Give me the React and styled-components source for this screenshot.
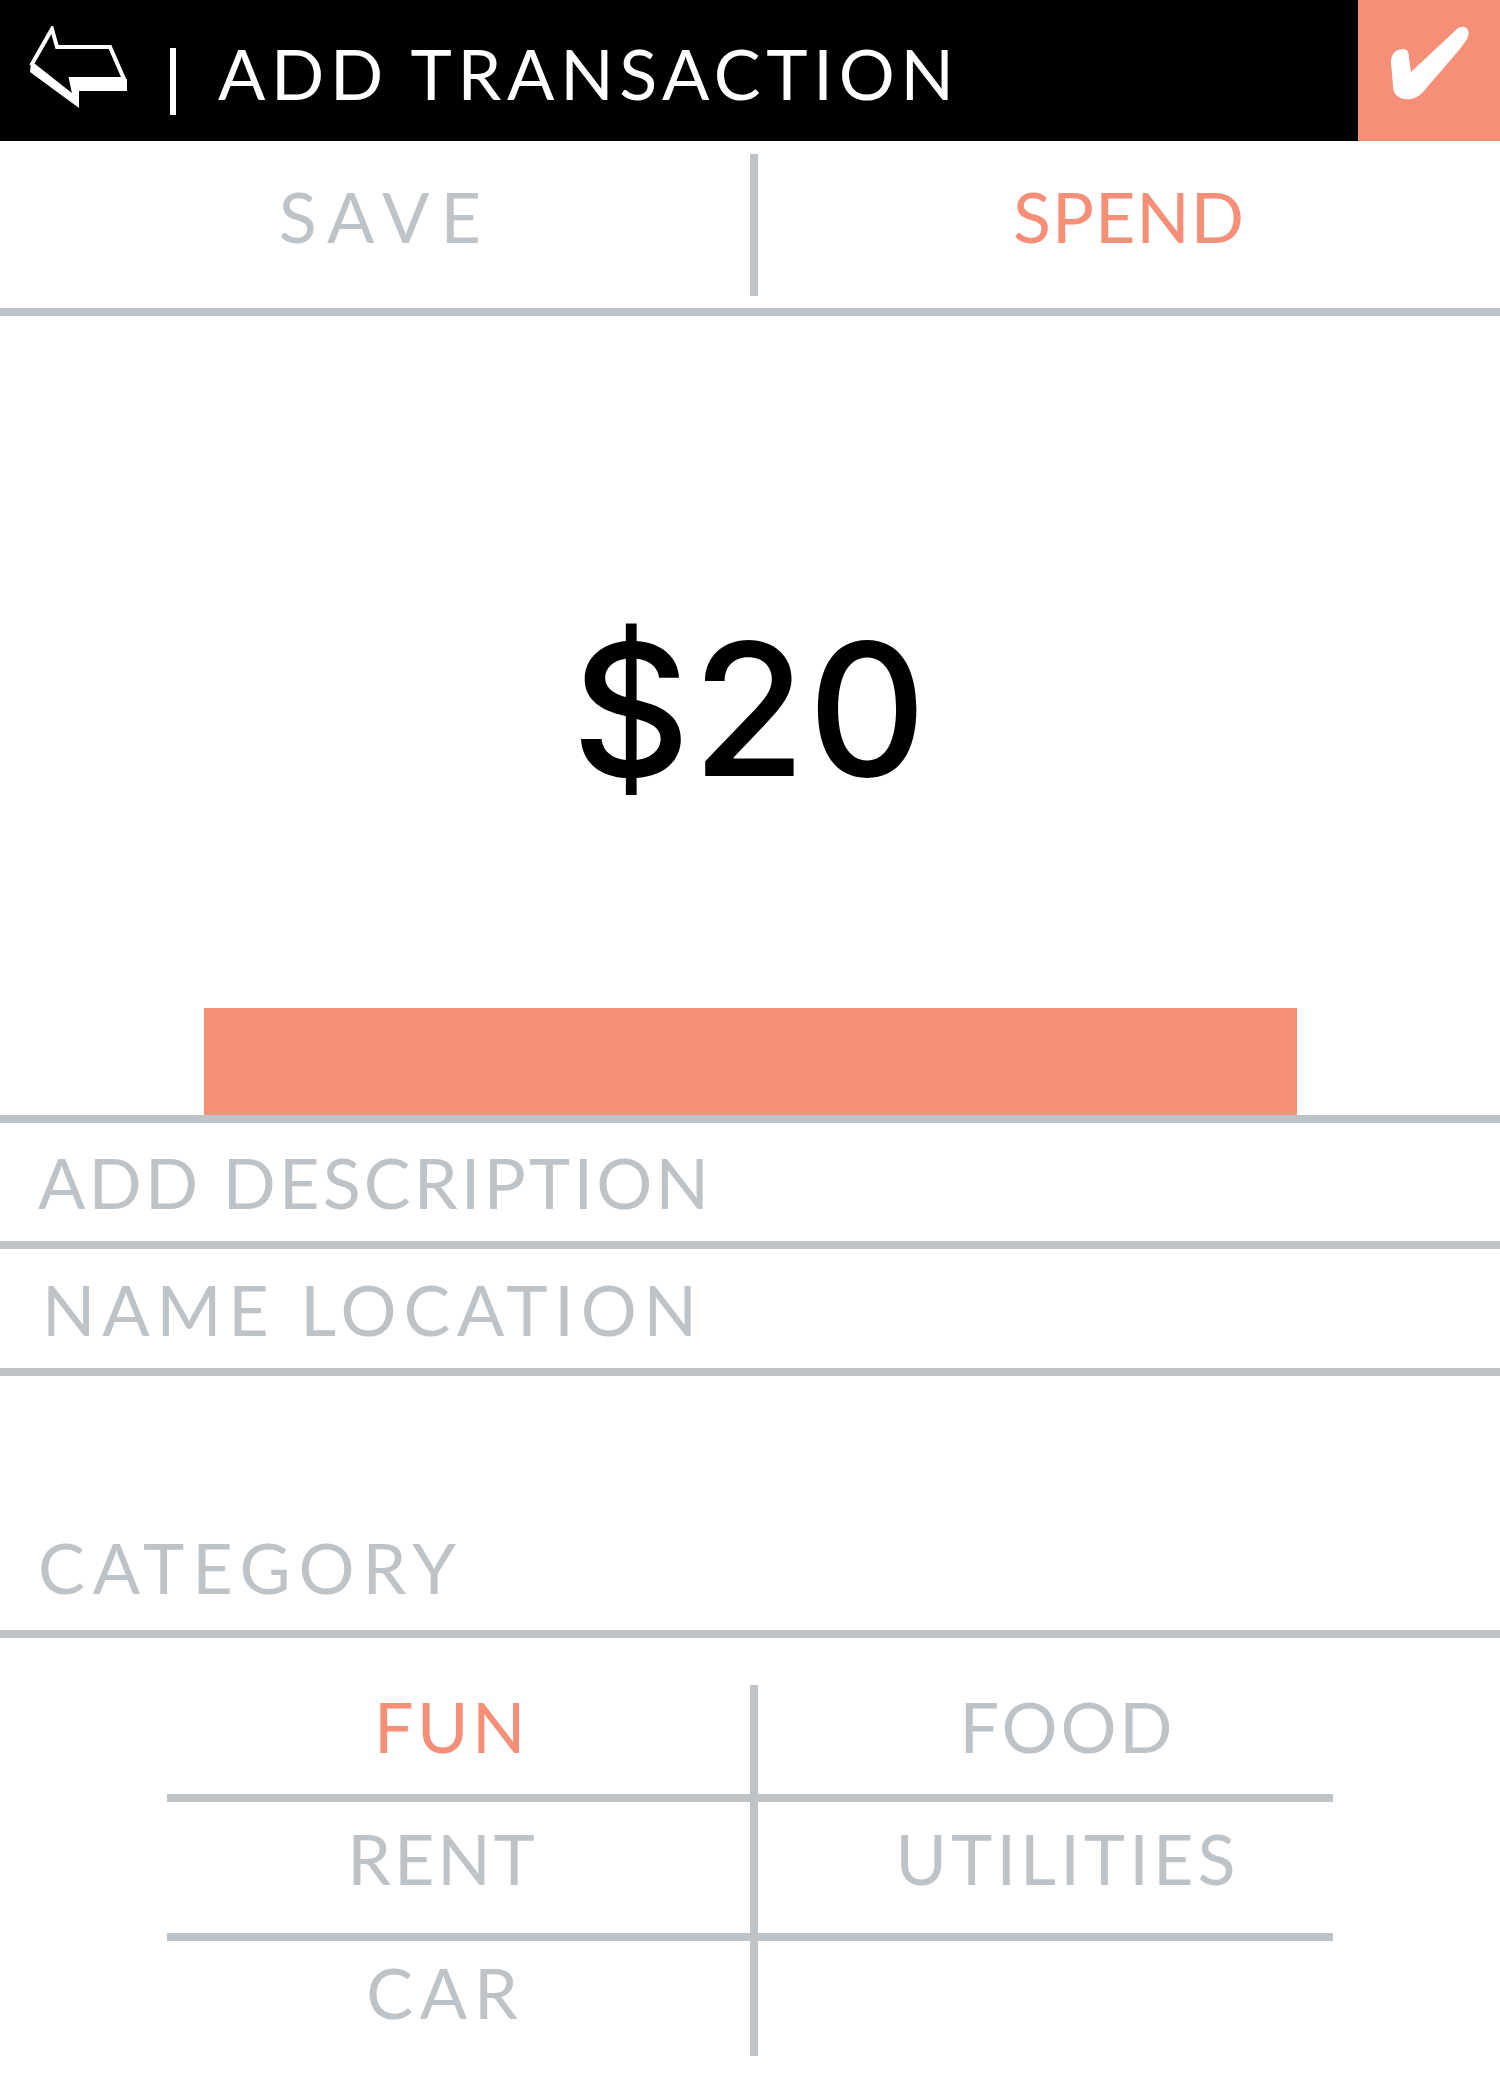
import React from "react";
import styled, { createGlobalStyle } from "styled-components";

const ORANGE = "#F58F78";
const GRAY = "#BEC3C7";

const GlobalStyle = createGlobalStyle`
  html, body { margin: 0; padding: 0; background: #fff; }
  body { font-family: Lato, "Open Sans", sans-serif; }
`;

const Page = styled.div`
  width: 1500px;
  min-height: 2100px;
  background: #fff;
`;

const Header = styled.header`
  display: flex;
  height: 141px;
  background: #000;
`;

const HeaderLeft = styled.div`
  flex: 1;
  display: flex;
  align-items: flex-start;
`;

const BackButton = styled.button`
  margin: 26px 0 0 29px;
  padding: 0;
  border: 0;
  background: none;
  width: 98px;
  height: 83px;
  cursor: pointer;
`;

const TitleDivider = styled.span`
  width: 6px;
  height: 67px;
  margin: 48px 0 0 43px;
  background: #fff;
`;

const Title = styled.h1`
  margin: 38px 0 0 42px;
  font-size: 70px;
  line-height: 70px;
  font-weight: 400;
  letter-spacing: ${(p) => p.$ls}px;
  color: #fff;
  white-space: nowrap;
`;

const ConfirmButton = styled.button`
  width: 142px;
  height: 141px;
  border: 0;
  padding: 0;
  background: ${ORANGE};
  display: flex;
  align-items: center;
  justify-content: center;
  cursor: pointer;
`;

const Toggle = styled.div`
  display: flex;
  align-items: center;
  height: 167px;
  border-bottom: 8px solid ${GRAY};
`;

const ToggleOption = styled.div`
  flex: ${(p) => (p.$width ? `0 0 ${p.$width}px` : 1)};
  box-sizing: border-box;
  text-align: center;
  padding: 0 0 18px ${(p) => p.$pl || 0}px;
  font-size: 70px;
  line-height: 70px;
  font-weight: 400;
  letter-spacing: ${(p) => p.$ls}px;
  color: ${(p) => (p.$active ? ORANGE : GRAY)};
  cursor: pointer;
`;

const ToggleDivider = styled.span`
  width: 8px;
  height: 142px;
  background: ${GRAY};
`;

const AmountSection = styled.section`
  display: flex;
  flex-direction: column;
  align-items: center;
  padding-top: 300px;
  border-bottom: 8px solid ${GRAY};
`;

const Amount = styled.div`
  font-family: Inter, Lato, sans-serif;
  font-size: 184px;
  line-height: 186px;
  font-weight: 500;
  letter-spacing: ${(p) => p.$ls}px;
  color: #000;
`;

const AmountBar = styled.div`
  width: 1093px;
  height: 107px;
  margin-top: 206px;
  background: ${ORANGE};
`;

const Field = styled.div`
  display: flex;
  align-items: center;
  height: ${(p) => p.$h}px;
  padding-left: ${(p) => p.$pl}px;
  border-bottom: 8px solid ${GRAY};
  font-size: 70px;
  line-height: 70px;
  font-weight: 400;
  letter-spacing: ${(p) => p.$ls}px;
  color: ${GRAY};
`;

const CategoryHeader = styled.div`
  display: flex;
  align-items: flex-end;
  height: 262px;
  box-sizing: border-box;
  padding: 0 0 28px 38px;
  border-bottom: 8px solid ${GRAY};
  font-size: 70px;
  line-height: 70px;
  font-weight: 400;
  letter-spacing: ${(p) => p.$ls}px;
  color: ${GRAY};
`;

const CategoryGrid = styled.div`
  display: grid;
  grid-template-columns: 591px 575px;
  width: 1166px;
  margin: 47px auto 0;
`;

const CategoryCell = styled.div`
  box-sizing: border-box;
  height: ${(p) => p.$h}px;
  padding-top: ${(p) => p.$pt}px;
  padding-left: ${(p) => (p.$left ? 0 : 44)}px;
  padding-right: ${(p) => (p.$left ? p.$pr : 0)}px;
  border-right: ${(p) => (p.$left ? `8px solid ${GRAY}` : "none")};
  border-bottom: ${(p) => (p.$last ? "none" : `8px solid ${GRAY}`)};
  text-align: center;
  font-size: 70px;
  line-height: 70px;
  font-weight: 400;
  letter-spacing: ${(p) => p.$ls}px;
  color: ${(p) => (p.$active ? ORANGE : GRAY)};
  cursor: pointer;
`;

const BackArrow = () => (
  <svg width="98" height="83" viewBox="29 26 98 83">
    <path
      d="M52 29 L57 47 L110 47 L124 79 L71 79 L75 98 L32 64 Z"
      fill="none"
      stroke="#fff"
      strokeWidth="4"
    />
    <path d="M31 63 L30 72 L79 108 L79 91 L127 91 L127 79 L124 79 L124 81 L72 81 L76 99 Z" fill="#fff" />
  </svg>
);

const CheckMark = () => (
  <svg width="142" height="141" viewBox="0 0 142 141">
    <path
      d="M33 62 C33 52 40 49 45 49 C50 49 51 53 51 58 L53 72 L99 29 C105 24 113 28 110 37 C107 44 95 57 66 91 C60 98 53 100 47 99 C39 98 35 93 35 86 Z"
      fill="#fff"
    />
  </svg>
);

const categories = [
  { name: "FUN", h: 117, pt: 6, left: true, pr: 14, ls: 3.5, active: true },
  { name: "FOOD", h: 117, pt: 6, ls: 2.9 },
  { name: "RENT", h: 139, pt: 21, left: true, pr: 32, ls: 2.8 },
  { name: "UTILITIES", h: 139, pt: 21, ls: 4.1 },
  { name: "CAR", h: 115, pt: 16, left: true, pr: 26, ls: 6.9, last: true },
  { name: "", h: 115, pt: 16, ls: 0, last: true },
];

export default function App() {
  return (
    <Page>
      <GlobalStyle />
      <Header>
        <HeaderLeft>
          <BackButton aria-label="Back">
            <BackArrow />
          </BackButton>
          <TitleDivider />
          <Title $ls={5.7}>ADD TRANSACTION</Title>
        </HeaderLeft>
        <ConfirmButton aria-label="Confirm">
          <CheckMark />
        </ConfirmButton>
      </Header>

      <Toggle>
        <ToggleOption $width={750} $pl={21} $ls={11.3}>SAVE</ToggleOption>
        <ToggleDivider />
        <ToggleOption $ls={1} $active>SPEND</ToggleOption>
      </Toggle>

      <AmountSection>
        <Amount $ls={2}>$20</Amount>
        <AmountBar />
      </AmountSection>

      <Field $h={118} $pl={38} $ls={3.2}>ADD DESCRIPTION</Field>
      <Field $h={119} $pl={42} $ls={6.8}>NAME LOCATION</Field>

      <CategoryHeader $ls={7.9}>CATEGORY</CategoryHeader>

      <CategoryGrid>
        {categories.map((c, i) => (
          <CategoryCell
            key={i}
            $h={c.h}
            $pt={c.pt}
            $pr={c.pr}
            $left={c.left}
            $last={c.last}
            $active={c.active}
            $ls={c.ls}
          >
            {c.name}
          </CategoryCell>
        ))}
      </CategoryGrid>
    </Page>
  );
}
